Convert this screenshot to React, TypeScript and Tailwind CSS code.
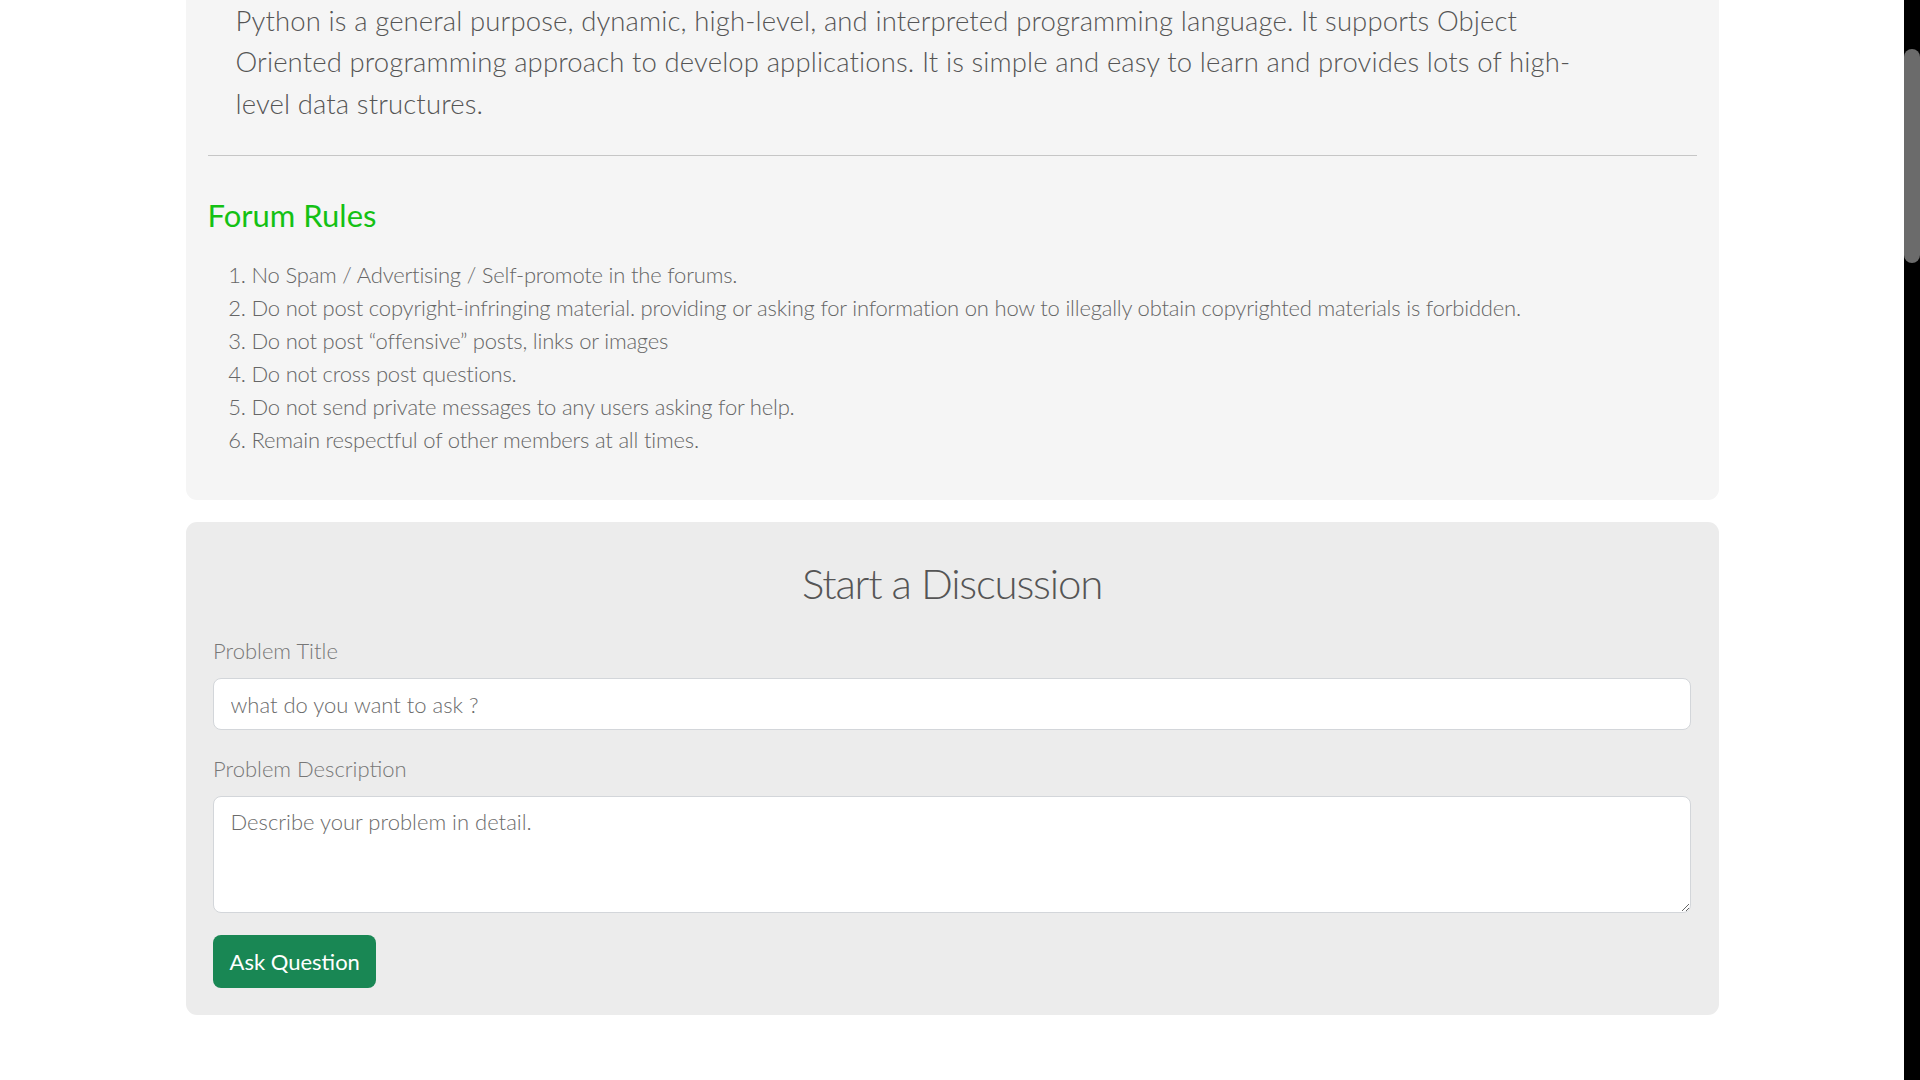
const rules = [
  "No Spam / Advertising / Self-promote in the forums.",
  "Do not post copyright-infringing material. providing or asking for information on how to illegally obtain copyrighted materials is forbidden.",
  "Do not post \u201coffensive\u201d posts, links or images",
  "Do not cross post questions.",
  "Do not send private messages to any users asking for help.",
  "Remain respectful of other members at all times.",
];

const font = "font-['Lato','Liberation_Sans',sans-serif]";

export default function App() {
  return (
    <div className={`flex h-[1080px] overflow-hidden bg-white ${font}`}>
      <div className="flex-1">
        <div className="mx-auto w-[1533px]">
          {/* Category intro + rules */}
          <section className="rounded-b-[11px] bg-[#f5f5f5] px-[22px] pb-[44px]">
            <p className="pl-[28px] text-[27.5px] font-light leading-[41.25px] tracking-[0.12px] text-[#555]">
              <span className="block whitespace-nowrap">
                Python is a general purpose, dynamic, high-level, and interpreted programming language. It supports Object
              </span>
              <span className="block whitespace-nowrap">
                Oriented programming approach to develop applications. It is simple and easy to learn and provides lots of high-
              </span>
              <span className="block whitespace-nowrap">level data structures.</span>
            </p>
            <hr className="mt-[31px] border-t border-[#c6c6c6]" />
            <h4 className="mt-[41px] text-[31px] leading-[37px] text-[#14c114]">Forum Rules</h4>
            <ol className="mt-[24.5px] list-decimal pl-[44px] text-[22px] font-light leading-[33px] tracking-[-0.2px] text-[#666]">
              {rules.map((r) => (
                <li key={r} className="whitespace-nowrap">
                  {r}
                </li>
              ))}
            </ol>
          </section>

          {/* Start a discussion form */}
          <section className="mt-[22px] rounded-[11px] bg-[#ececec] px-[27.5px] pt-[35px] pb-[27px]">
            <h2 className="text-center text-[42px] font-light leading-[53px] tracking-[-1.2px] text-[#555]">
              Start a Discussion
            </h2>
            <form className="mt-[24px] flex flex-col" onSubmit={(e) => e.preventDefault()}>
              <label className="text-[22px] font-light leading-[33px] text-[#777]">Problem Title</label>
              <input
                type="text"
                placeholder="what do you want to ask ?"
                className="mt-[11px] h-[52px] rounded-[8px] border border-[#d3d6da] bg-white px-[16.5px] text-[22px] font-light text-[#555] outline-none placeholder:text-[#6b6b6b]"
              />
              <label className="mt-[22px] text-[22px] font-light leading-[33px] text-[#777]">
                Problem Description
              </label>
              <textarea
                placeholder="Describe your problem in detail."
                className="mt-[11px] h-[117px] rounded-[8px] border border-[#d3d6da] bg-white px-[16.5px] py-[8px] text-[22px] font-light leading-[33px] text-[#555] outline-none placeholder:text-[#6b6b6b]"
              />
              <div className="mt-[22px]">
                <button
                  type="submit"
                  className="h-[53px] rounded-[8px] bg-[#198754] px-[16.5px] text-[22px] text-white"
                >
                  Ask Question
                </button>
              </div>
            </form>
          </section>
        </div>
      </div>

      {/* Browser scrollbar */}
      <div className="w-[16px] bg-black">
        <div className="mt-[49px] h-[214px] rounded-full bg-[#6b6b6b]" />
      </div>
    </div>
  );
}
